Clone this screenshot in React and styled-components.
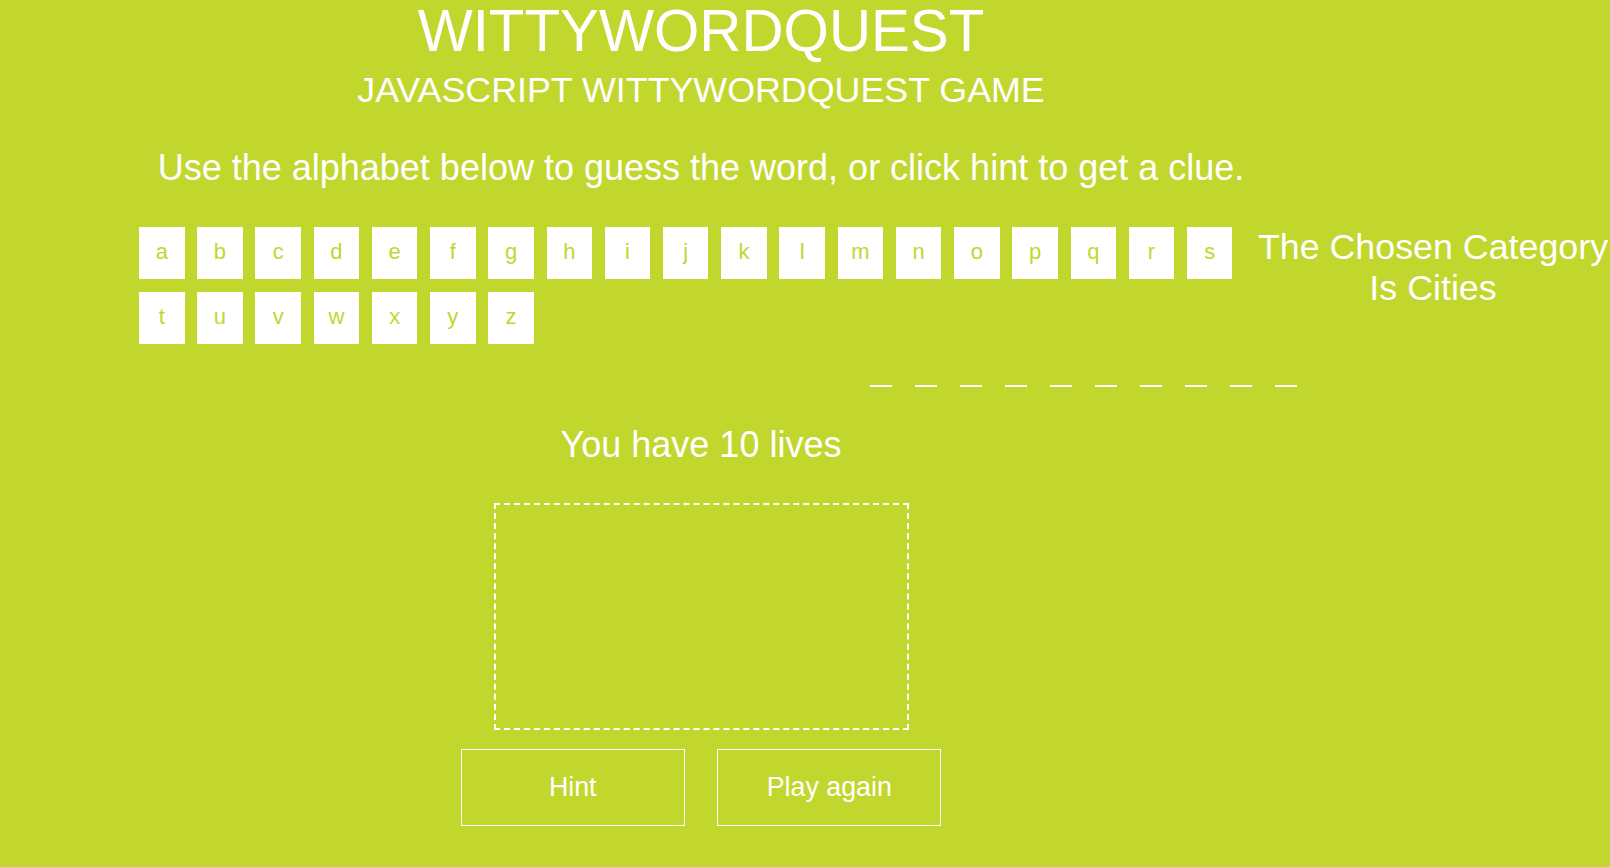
import React from "react";
import styled, { createGlobalStyle } from "styled-components";

const lime = "#c1d72e";

const GlobalStyle = createGlobalStyle`
  html, body {
    margin: 0;
    padding: 0;
    background: ${lime};
    min-height: 100%;
  }
  body {
    font-family: "Liberation Sans", Arial, Helvetica, sans-serif;
    color: #fff;
    overflow: hidden;
  }
`;

const Page = styled.div`
  width: 1610px;
  height: 867px;
  background: ${lime};
`;

const Header = styled.header`
  width: 1402px;
  text-align: center;
`;

const Title = styled.h1`
  margin: 0;
  font-size: 58.3px;
  line-height: 62px;
  font-weight: normal;
`;

const Subtitle = styled.h2`
  margin: 8px 0 0;
  font-size: 35.8px;
  font-weight: normal;
  line-height: normal;
`;

const Intro = styled.p`
  margin: 35.5px 0 0;
  font-size: 36px;
  line-height: normal;
`;

const Board = styled.div`
  display: flex;
  align-items: flex-start;
  margin-top: 38px;
  padding-left: 139px;
`;

const Alphabet = styled.ul`
  flex: none;
  display: flex;
  flex-wrap: wrap;
  gap: 13.3px 12.72px;
  width: 1094px;
  margin: 0;
  padding: 0;
  list-style: none;
`;

const Key = styled.li`
  box-sizing: border-box;
  width: 45.5px;
  height: 52px;
  padding-top: 12px;
  background: #fff;
  color: ${lime};
  font-size: 22px;
  text-align: center;
  cursor: pointer;
`;

const Category = styled.p`
  flex: none;
  width: 364px;
  margin: 0 0 0 18px;
  font-size: 35.8px;
  line-height: 41px;
  text-align: center;
`;

const Word = styled.ul`
  display: flex;
  gap: 23px;
  margin: 41px 0 0 870px;
  padding: 0;
  list-style: none;
`;

const Slot = styled.li`
  width: 22px;
  height: 2px;
  background: #fff;
`;

const Game = styled.section`
  width: 1402px;
  display: flex;
  flex-direction: column;
  align-items: center;
`;

const Lives = styled.p`
  margin: 37.5px 0 0;
  font-size: 36px;
  line-height: normal;
`;

const Stickman = styled.div`
  box-sizing: border-box;
  width: 415px;
  height: 227px;
  margin-top: 36.5px;
  border: 2px dashed #fff;
`;

const Buttons = styled.div`
  display: flex;
  gap: 32.6px;
  margin-top: 19px;
`;

const Button = styled.button`
  box-sizing: border-box;
  width: 224px;
  height: 77px;
  background: transparent;
  border: 1px solid #fff;
  color: #fff;
  font-family: "Liberation Sans", Arial, Helvetica, sans-serif;
  font-size: 26.8px;
  cursor: pointer;
`;

const letters = "abcdefghijklmnopqrstuvwxyz".split("");

export default function App() {
  return (
    <Page>
      <GlobalStyle />
      <Header>
        <Title>WITTYWORDQUEST</Title>
        <Subtitle>JAVASCRIPT WITTYWORDQUEST GAME</Subtitle>
        <Intro>
          Use the alphabet below to guess the word, or click hint to get a clue.
        </Intro>
      </Header>
      <Board>
        <Alphabet>
          {letters.map((l) => (
            <Key key={l}>{l}</Key>
          ))}
        </Alphabet>
        <Category>The Chosen Category Is Cities</Category>
      </Board>
      <Word>
        {Array.from({ length: 10 }).map((_, i) => (
          <Slot key={i} />
        ))}
      </Word>
      <Game>
        <Lives>You have 10 lives</Lives>
        <Stickman />
        <Buttons>
          <Button>Hint</Button>
          <Button>Play again</Button>
        </Buttons>
      </Game>
    </Page>
  );
}
